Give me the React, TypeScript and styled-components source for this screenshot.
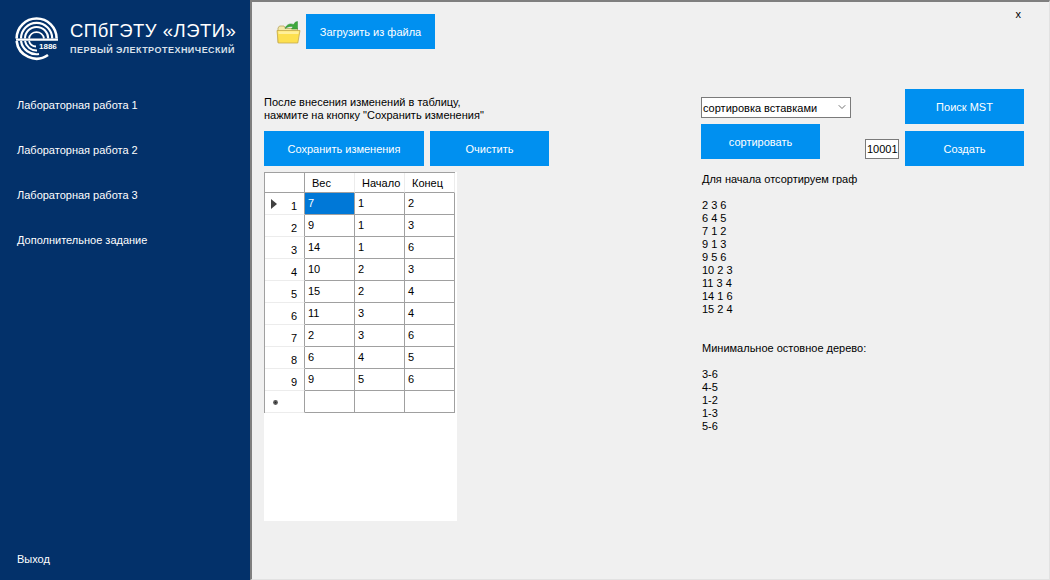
import { ChevronDown } from "lucide-react";
import styled, { createGlobalStyle } from "styled-components";

const GlobalStyle = createGlobalStyle`
  html, body {
    margin: 0;
    padding: 0;
    height: 100%;
    overflow: hidden;
  }
  body {
    font-family: "Liberation Sans", Arial, sans-serif;
    font-size: 11px;
  }
`;

const Page = styled.div`
  display: flex;
  width: 1050px;
  height: 580px;
`;

const Sidebar = styled.aside`
  display: flex;
  flex-direction: column;
  flex: none;
  width: 250px;
  background: #03316a;
  color: #fff;
`;

const Brand = styled.div`
  display: flex;
  height: 82px;
  padding: 17px 0 0 15px;
  box-sizing: border-box;
  gap: 11px;
`;

const BrandText = styled.div`
  display: flex;
  flex-direction: column;
  padding-top: 3px;
`;

const BrandName = styled.div`
  font-size: 18.5px;
  line-height: 22px;
  letter-spacing: 0.5px;
  white-space: nowrap;
`;

const BrandSub = styled.div`
  margin-top: 2px;
  font-size: 9px;
  line-height: 12px;
  font-weight: bold;
  letter-spacing: 0.48px;
  color: #d8e0ea;
  white-space: nowrap;
`;

const NavItem = styled.div`
  display: flex;
  align-items: center;
  height: 45px;
  padding-left: 17px;
`;

const Spacer = styled.div`
  flex: 1;
`;

const ExitItem = styled(NavItem)`
  height: 42px;
`;

const Main = styled.main`
  position: relative;
  flex: 1;
  box-sizing: border-box;
  padding: 12px 0 0 12px;
  background: #f0f0f0;
  border-top: 2px solid #7f7f7f;
  border-left: 2px solid #7f7f7f;
  border-right: 1px solid #e2e2e2;
  border-bottom: 1px solid #e2e2e2;
`;

const CloseMark = styled.div`
  position: absolute;
  top: 6px;
  right: 28px;
  font-size: 11px;
  line-height: 13px;
  color: #000;
`;

const Toolbar = styled.div`
  display: flex;
  align-items: center;
  height: 35px;
  padding-left: 12px;
  gap: 5px;
`;

const Workspace = styled.div`
  display: flex;
  margin-top: 40px;
`;

const LeftColumn = styled.section`
  flex: none;
  width: 437px;
  padding-top: 7px;
`;

const Hint = styled.div`
  line-height: 13px;
  height: 35px;
  color: #000;
  white-space: pre-line;
`;

const ButtonRow = styled.div`
  display: flex;
  gap: 6px;
  margin-bottom: 6px;
`;

const ActionButton = styled.button<{ $width: number }>`
  display: block;
  flex: none;
  width: ${({ $width }) => $width}px;
  height: 35px;
  padding: 0;
  border: none;
  background: #0090f0;
  color: #fff;
  font-family: inherit;
  font-size: 11px;
`;

const GridPanel = styled.div`
  width: 193px;
  height: 349px;
  background: #fff;
`;

const DataTable = styled.table`
  table-layout: fixed;
  width: 191px;
  border-collapse: separate;
  border-spacing: 0;
  border-top: 1px solid #a0a0a0;
  border-left: 1px solid #a0a0a0;
  color: #000;
  font-size: 11px;
`;

const HeadCell = styled.th<{ $width: number }>`
  height: 19px;
  box-sizing: content-box;
  padding: 0 0 0 7px;
  width: ${({ $width }) => $width - 8}px;
  text-align: left;
  font-weight: normal;
  border-right: 1px solid #ececec;
  border-bottom: 1px solid #a0a0a0;
  &:first-child {
    border-right-color: #a0a0a0;
  }
`;

const RowHead = styled.td`
  height: 21px;
  padding: 0;
  box-sizing: content-box;
  border-right: 1px solid #a0a0a0;
  border-bottom: 1px solid #ececec;
`;

const RowHeadInner = styled.div`
  display: flex;
  align-items: center;
  justify-content: space-between;
  height: 21px;
  padding: 5px 7px 0 6px;
  box-sizing: border-box;
`;

const IndicatorSlot = styled.span`
  display: flex;
  margin-top: -4px;
`;

const NewRowSlot = styled(IndicatorSlot)`
  margin: -4px 0 0 2px;
`;

const DataCell = styled.td<{ $selected?: boolean }>`
  height: 20px;
  padding: 0 0 1px 3px;
  box-sizing: content-box;
  line-height: 20px;
  vertical-align: middle;
  background: ${({ $selected }) => ($selected ? "#0078d7" : "#fff")};
  color: ${({ $selected }) => ($selected ? "#fff" : "#000")};
  border-right: 1px solid #a0a0a0;
  border-bottom: 1px solid #a0a0a0;
`;

const RightColumn = styled.section`
  flex: none;
  width: 325px;
`;

const Controls = styled.div`
  display: flex;
  align-items: flex-start;
`;

const SortStack = styled.div`
  display: flex;
  flex-direction: column;
  flex: none;
  width: 150px;
  padding-top: 8px;
  gap: 6px;
`;

const SelectBox = styled.div`
  position: relative;
  height: 21px;
`;

const NativeSelect = styled.select`
  display: block;
  width: 100%;
  height: 21px;
  padding: 0 0 0 1px;
  box-sizing: border-box;
  appearance: none;
  border: 1px solid #7a7a7a;
  border-radius: 0;
  background: #fff;
  color: #000;
  font-family: inherit;
  font-size: 11px;
`;

const SelectArrow = styled(ChevronDown)`
  position: absolute;
  top: 4px;
  right: 3px;
  color: #444;
`;

const CountInput = styled.input`
  flex: none;
  width: 34px;
  height: 20px;
  margin: 50px 6px 0 14px;
  padding: 0 0 0 1px;
  box-sizing: border-box;
  border: 1px solid #7a7a7a;
  border-radius: 0;
  background: #fff;
  color: #000;
  font-family: inherit;
  font-size: 11px;
`;

const MstStack = styled.div`
  display: flex;
  flex-direction: column;
  gap: 7px;
`;

const Output = styled.div`
  margin: 7px 0 0 1px;
  line-height: 13px;
  color: #000;
  white-space: pre-line;
`;

const rows = [
  [7, 1, 2],
  [9, 1, 3],
  [14, 1, 6],
  [10, 2, 3],
  [15, 2, 4],
  [11, 3, 4],
  [2, 3, 6],
  [6, 4, 5],
  [9, 5, 6],
];

const outputText = `Для начала отсортируем граф

2 3 6
6 4 5
7 1 2
9 1 3
9 5 6
10 2 3
11 3 4
14 1 6
15 2 4


Минимальное остовное дерево:

3-6
4-5
1-2
1-3
5-6`;

function Emblem() {
  return (
    <svg width="44" height="44" viewBox="0 0 44 44" fill="none" stroke="#fff" aria-hidden="true">
      <path d="M1.6 21.5A20 20 0 0 1 41.6 21.5" strokeWidth="2.6" />
      <path d="M1.6 24A20 20 0 0 0 33 38" strokeWidth="2.6" />
      <path d="M6 21.5A15.6 15.6 0 0 1 37.2 21.5" strokeWidth="2.2" />
      <path d="M6 24A15.6 15.6 0 0 0 24 37" strokeWidth="2.2" />
      <path d="M10 21.5A11.6 11.6 0 0 1 33.2 21.5" strokeWidth="2" />
      <path d="M10 24A11.6 11.6 0 0 0 22 33.5" strokeWidth="2" />
      <path d="M14 21.5A7.6 7.6 0 0 1 29 21.5" strokeWidth="1.8" />
      <path d="M14 24A7.6 7.6 0 0 0 21 29.5" strokeWidth="1.8" />
      <path d="M1 22.6H43" strokeWidth="2.2" />
      <text x="24" y="32" fill="#fff" stroke="none" fontFamily="Liberation Sans" fontSize="8" fontWeight="bold">
        1886
      </text>
    </svg>
  );
}

function FolderIcon() {
  return (
    <svg width="25" height="24" viewBox="0 0 25 24" aria-hidden="true">
      <path d="M2 8V22.5H21.5V8.5H9.5L8 6H3.5Z" fill="#f4e9a8" stroke="#b8a35c" strokeWidth="0.8" />
      <path d="M9 8.5C10.5 4.5 14 3 17.5 4.5L19.5 2L21.5 1.5V9H15.5L17 7C14.5 6 12 6.6 9 8.5Z" fill="#3fa83c" stroke="#2c8a34" strokeWidth="0.5" />
      <path d="M1 10.5H24L21.8 23H2.2Z" fill="#fde04f" stroke="#c4a94e" strokeWidth="0.8" />
      <path d="M2.2 11.3H22.9L22.5 14H2.6Z" fill="#fff09a" />
    </svg>
  );
}

function App() {
  return (
    <>
      <GlobalStyle />
      <Page>
        <Sidebar>
          <Brand>
            <Emblem />
            <BrandText>
              <BrandName>СПбГЭТУ «ЛЭТИ»</BrandName>
              <BrandSub>ПЕРВЫЙ ЭЛЕКТРОТЕХНИЧЕСКИЙ</BrandSub>
            </BrandText>
          </Brand>
          <NavItem>Лабораторная работа 1</NavItem>
          <NavItem>Лабораторная работа 2</NavItem>
          <NavItem>Лабораторная работа 3</NavItem>
          <NavItem>Дополнительное задание</NavItem>
          <Spacer />
          <ExitItem>Выход</ExitItem>
        </Sidebar>
        <Main>
          <CloseMark>x</CloseMark>
          <Toolbar>
            <FolderIcon />
            <ActionButton $width={129}>Загрузить из файла</ActionButton>
          </Toolbar>
          <Workspace>
            <LeftColumn>
              <Hint>{'После внесения изменений в таблицу,\nнажмите на кнопку "Сохранить изменения"'}</Hint>
              <ButtonRow>
                <ActionButton $width={160}>Сохранить изменения</ActionButton>
                <ActionButton $width={119}>Очистить</ActionButton>
              </ButtonRow>
              <GridPanel>
                <DataTable>
                  <thead>
                    <tr>
                      <HeadCell $width={40} />
                      <HeadCell $width={50}>Вес</HeadCell>
                      <HeadCell $width={50}>Начало</HeadCell>
                      <HeadCell $width={50}>Конец</HeadCell>
                    </tr>
                  </thead>
                  <tbody>
                    {rows.map((row, index) => (
                      <tr key={index}>
                        <RowHead>
                          <RowHeadInner>
                            <IndicatorSlot>
                              {index === 0 && (
                                <svg width="6" height="10" viewBox="0 0 6 10" aria-hidden="true">
                                  <path d="M0 0L6 5L0 10Z" fill="#404040" />
                                </svg>
                              )}
                            </IndicatorSlot>
                            {index + 1}
                          </RowHeadInner>
                        </RowHead>
                        {row.map((value, cell) => (
                          <DataCell key={cell} $selected={index === 0 && cell === 0}>
                            {value}
                          </DataCell>
                        ))}
                      </tr>
                    ))}
                    <tr>
                      <RowHead>
                        <RowHeadInner>
                          <NewRowSlot>
                            <svg width="5" height="5" viewBox="0 0 5 5" aria-hidden="true">
                              <circle cx="2.5" cy="2.5" r="2.4" fill="#555" />
                              <circle cx="2.5" cy="2.5" r="0.7" fill="#222" />
                            </svg>
                          </NewRowSlot>
                        </RowHeadInner>
                      </RowHead>
                      <DataCell />
                      <DataCell />
                      <DataCell />
                    </tr>
                  </tbody>
                </DataTable>
              </GridPanel>
            </LeftColumn>
            <RightColumn>
              <Controls>
                <SortStack>
                  <SelectBox>
                    <NativeSelect defaultValue="insertion">
                      <option value="insertion">сортировка вставками</option>
                    </NativeSelect>
                    <SelectArrow size={12} strokeWidth={1.5} />
                  </SelectBox>
                  <ActionButton $width={119}>сортировать</ActionButton>
                </SortStack>
                <CountInput readOnly value="10001" />
                <MstStack>
                  <ActionButton $width={119}>Поиск MST</ActionButton>
                  <ActionButton $width={119}>Создать</ActionButton>
                </MstStack>
              </Controls>
              <Output>{outputText}</Output>
            </RightColumn>
          </Workspace>
        </Main>
      </Page>
    </>
  );
}

export default App;
